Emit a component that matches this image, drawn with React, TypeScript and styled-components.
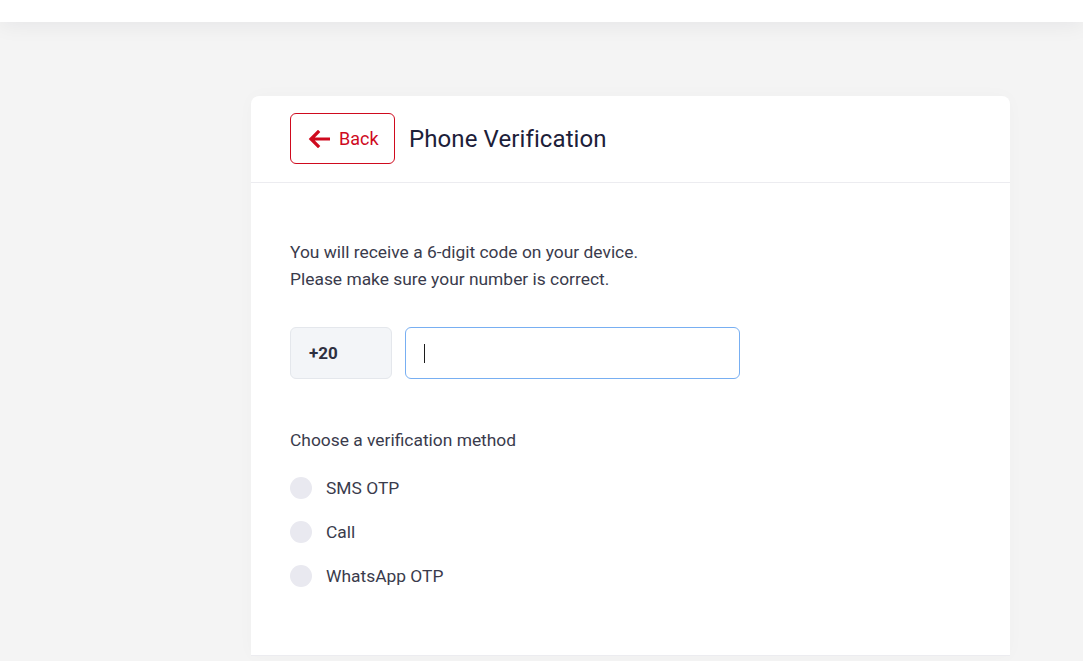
import React from "react";
import styled, { createGlobalStyle } from "styled-components";

const Global = createGlobalStyle`
  html, body { margin: 0; padding: 0; background: #f4f4f4; }
  body { font-family: Roboto, "Liberation Sans", Arial, sans-serif; -webkit-font-smoothing: antialiased; }
  * { box-sizing: border-box; }
`;

const Page = styled.div`
  min-height: 661px;
  background: #f4f4f4;
  overflow: hidden;
`;

const TopBar = styled.div`
  height: 22px;
  background: #ffffff;
  box-shadow: 0 2px 22px rgba(20, 20, 40, 0.07);
  position: relative;
  z-index: 1;
`;

const Main = styled.main`
  padding: 74px 0 0 251px;
`;

const Card = styled.section`
  width: 759px;
  background: #ffffff;
  border-radius: 8px 8px 0 0;
  box-shadow: 0 0 18px rgba(20, 20, 40, 0.025);
`;

const Header = styled.header`
  display: flex;
  align-items: center;
  gap: 14px;
  padding: 17px 39px 18px;
  border-bottom: 1px solid #ececf0;
`;

const BackButton = styled.button`
  display: flex;
  align-items: center;
  gap: 9px;
  height: 51px;
  width: 105px;
  padding: 0 0 0 17px;
  border: 1px solid #cf0a1e;
  border-radius: 6px;
  background: #ffffff;
  color: #cf0a1e;
  font-family: Roboto, "Liberation Sans", Arial, sans-serif;
  font-size: 18px;
  cursor: pointer;
`;

const Title = styled.h1`
  margin: 0;
  font-size: 24px;
  font-weight: 400;
  color: #1c2039;
  letter-spacing: 0.1px;
`;

const Body = styled.div`
  padding: 56px 39px 57px;
  border-bottom: 1px solid #ececf0;
`;

const Intro = styled.p`
  margin: 0;
  font-size: 17.4px;
  line-height: 27px;
  color: #3a3b4c;
`;

const PhoneRow = styled.div`
  display: flex;
  gap: 13px;
  margin-top: 34px;
`;

const Prefix = styled.div`
  width: 102px;
  height: 52px;
  display: flex;
  align-items: center;
  padding-left: 18px;
  background: #f3f5f8;
  border: 1px solid #e4e7ec;
  border-radius: 6px;
  font-size: 17px;
  font-weight: 700;
  color: #2e3040;
`;

const Field = styled.div`
  width: 335px;
  height: 52px;
  display: flex;
  align-items: center;
  padding-left: 18px;
  border: 1px solid #78aff2;
  border-radius: 6px;
  background: #ffffff;
`;

const Caret = styled.span`
  display: block;
  width: 1px;
  height: 19px;
  background: #1c1c1c;
`;

const Label = styled.div`
  margin-top: 49px;
  font-size: 17.4px;
  line-height: 24px;
  color: #3a3b4c;
`;

const Options = styled.div`
  margin-top: 14px;
  display: flex;
  flex-direction: column;
`;

const Option = styled.label`
  display: flex;
  align-items: center;
  gap: 14px;
  height: 44px;
  font-size: 17.4px;
  color: #3a3b4c;
  cursor: pointer;
`;

const Radio = styled.span`
  width: 22px;
  height: 22px;
  border-radius: 50%;
  background: #e9e9f0;
  flex-shrink: 0;
`;

const ArrowLeft = () => (
  <svg width="22" height="18" viewBox="0 0 22 18" fill="none">
    <path d="M21 9H3.5M10 2L3 9l7 7" stroke="#cf0a1e" strokeWidth="3.2" strokeLinecap="square" strokeLinejoin="miter" />
  </svg>
);

const methods = ["SMS OTP", "Call", "WhatsApp OTP"];

export default function App() {
  return (
    <Page>
      <Global />
      <TopBar />
      <Main>
        <Card>
          <Header>
            <BackButton>
              <ArrowLeft />
              Back
            </BackButton>
            <Title>Phone Verification</Title>
          </Header>
          <Body>
            <Intro>
              You will receive a 6-digit code on your device.
              <br />
              Please make sure your number is correct.
            </Intro>
            <PhoneRow>
              <Prefix>+20</Prefix>
              <Field>
                <Caret />
              </Field>
            </PhoneRow>
            <Label>Choose a verification method</Label>
            <Options>
              {methods.map((m) => (
                <Option key={m}>
                  <Radio />
                  {m}
                </Option>
              ))}
            </Options>
          </Body>
        </Card>
      </Main>
    </Page>
  );
}
